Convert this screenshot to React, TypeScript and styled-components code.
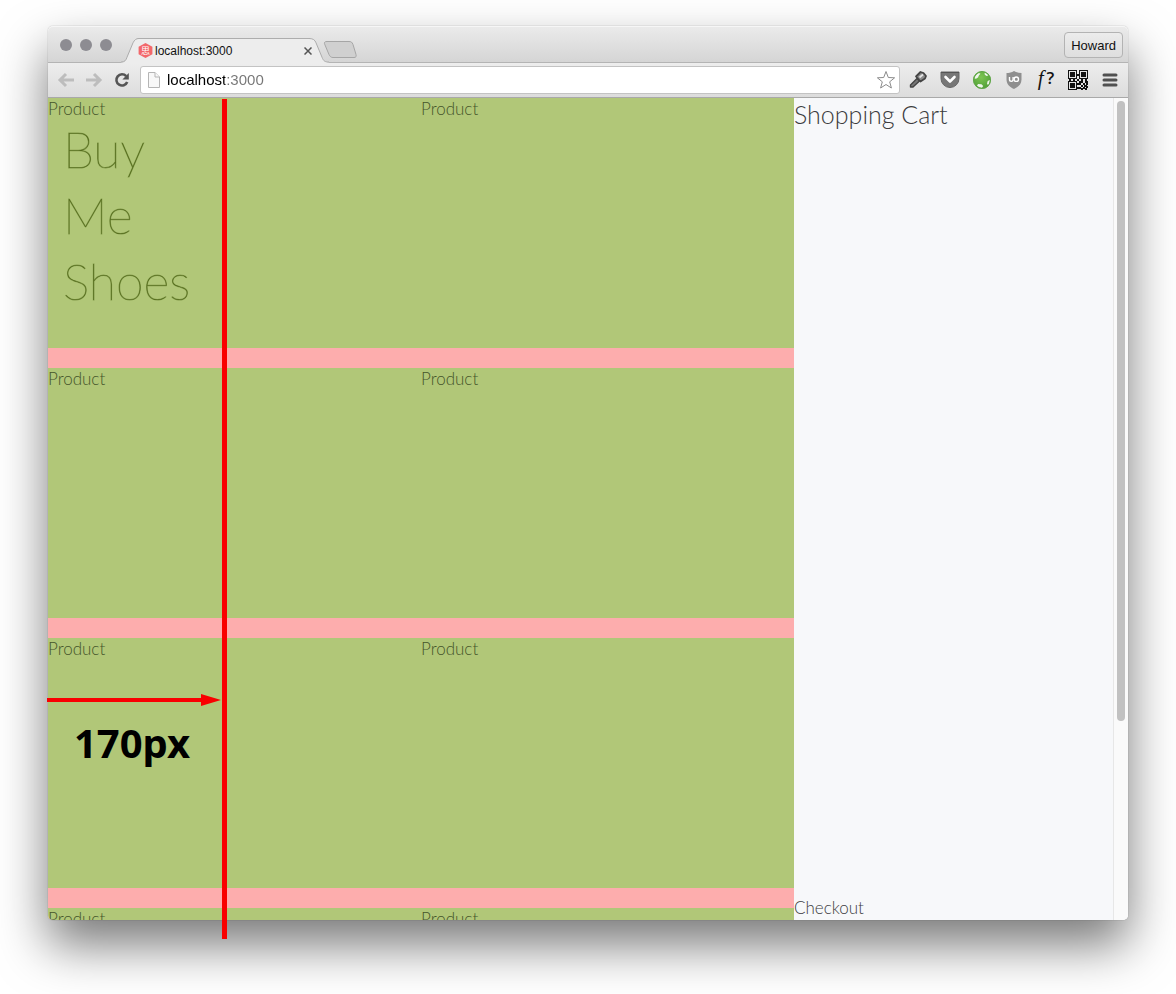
import React from "react";
import styled, { createGlobalStyle } from "styled-components";

const GlobalStyle = createGlobalStyle`
  * { box-sizing: border-box; }
  body {
    margin: 0;
    background: #fff;
    font-family: Lato, "Open Sans", sans-serif;
    font-weight: 300;
  }
  button, input { font-family: "Liberation Sans", Arial, sans-serif; margin: 0; }
`;

const Desktop = styled.div`
  height: 100vh;
  padding: 26px 48px 74px;
  overflow: hidden;
`;

const BrowserWindow = styled.div`
  position: relative;
  display: flex;
  flex-direction: column;
  height: 100%;
  border-radius: 5px;
  box-shadow: 0 0 1px rgba(0, 0, 0, 0.5), 0 25px 50px rgba(0, 0, 0, 0.53);
`;

const TabStrip = styled.header`
  display: flex;
  align-items: flex-end;
  flex: none;
  height: 37px;
  padding: 2px 5px 0 0;
  border-bottom: 1px solid #b4b4b4;
  border-radius: 5px 5px 0 0;
  background: linear-gradient(#ebebeb, #d5d5d5);
  box-shadow: inset 0 1px 0 #f6f6f6;
`;

const TrafficLights = styled.div`
  display: flex;
  align-self: center;
  gap: 8px;
  width: 73px;
  padding-left: 12px;
`;

const Light = styled.span`
  width: 12px;
  height: 12px;
  border-radius: 50%;
  background: #8d8c92;
`;

const Tab = styled.div`
  position: relative;
  display: flex;
  align-items: center;
  width: 208px;
  height: 25px;
  margin-bottom: -1px;
  padding: 0 14px 0 17px;
  font: 400 12px/16px "Liberation Sans", Arial, sans-serif;
  color: #111;
`;

const TabShape = styled.svg`
  position: absolute;
  inset: 0;
  width: 100%;
  height: 100%;
`;

const TabTitle = styled.span`
  position: relative;
  flex: 1;
  padding-left: 2px;
`;

const Favicon = styled.span`
  position: relative;
  display: grid;
  place-items: center;
  width: 15px;
  height: 15px;
  color: #fff;
  font: 400 9px/15px "Noto Sans CJK TC", sans-serif;
  background: #f2686b;
  clip-path: polygon(50% 0, 96% 25%, 96% 75%, 50% 100%, 4% 75%, 4% 25%);
`;

const IconButton = styled.button<{ $width?: number }>`
  position: relative;
  display: grid;
  place-items: center;
  flex: none;
  width: ${({ $width = 20 }) => $width}px;
  height: 24px;
  padding: 0;
  border: 0;
  color: #505050;
  background: transparent;
`;

const NewTab = styled(IconButton)`
  margin-left: -6px;
`;

const UserButton = styled.button`
  align-self: center;
  height: 26px;
  margin-left: auto;
  padding: 0 6px;
  border: 1px solid #b3b3b3;
  border-radius: 4px;
  background: linear-gradient(#ececec, #dedede);
  color: #111;
  font-size: 13px;
`;

const Toolbar = styled.div`
  display: flex;
  align-items: center;
  flex: none;
  height: 35px;
  padding: 0 6px 0 8px;
  border-bottom: 1px solid #a9a9a9;
  background: linear-gradient(#ededed, #dcdcdc);
`;

const Navigation = styled.nav`
  display: flex;
  gap: 8px;
  width: 84px;
`;

const AddressBar = styled.label`
  display: flex;
  align-items: center;
  flex: 1;
  height: 28px;
  padding: 0 3px 0 4px;
  border: 1px solid #c3c3c3;
  border-radius: 3px;
  background: #fff;
`;

const AddressInput = styled.input`
  flex: 1;
  min-width: 0;
  height: 24px;
  padding: 0 0 2px 4px;
  border: 0;
  outline: 0;
  color: #111;
  font-size: 15px;
  background: linear-gradient(to right, #000 62px, #757575 62px);
  background-clip: text;
  -webkit-background-clip: text;
  -webkit-text-fill-color: transparent;
`;

const Extensions = styled.div`
  display: flex;
  gap: 8px;
  padding-left: 6px;
`;

const Viewport = styled.main`
  display: flex;
  flex: 1;
  min-height: 0;
  overflow: hidden;
  border-radius: 0 0 5px 5px;
  background: #f7f8fa;
`;

const Products = styled.section`
  display: grid;
  grid-template-columns: 1fr 1fr;
  grid-auto-rows: 250px;
  align-content: start;
  row-gap: 20px;
  flex: 1;
  overflow: hidden;
  background: #fdadad;
`;

const Card = styled.article`
  background: #b1c778;
  color: #45552a;
  font-size: 17px;
  line-height: 22px;
`;

const Slogan = styled.h1`
  width: 170px;
  margin: -4px 0 0;
  padding: 0 15px;
  color: #4c6414;
  font-size: 50px;
  font-weight: 200;
  line-height: 66px;
  -webkit-text-stroke: 1px rgba(76, 100, 20, 0.45);
`;

const Cart = styled.aside`
  display: flex;
  flex-direction: column;
  justify-content: space-between;
  width: 319px;
  background: #f7f8fa;
  color: #3c3c3e;
`;

const CartTitle = styled.h2`
  margin: 0;
  font-size: 25px;
  font-weight: 300;
  line-height: 32px;
`;

const Checkout = styled.a`
  color: inherit;
  font-size: 17px;
  line-height: 24px;
  text-decoration: none;
`;

const ScrollTrack = styled.div`
  width: 15px;
  padding: 3px 3px 0 3px;
  border-left: 1px solid #e7e7e7;
  background: #fafafa;
`;

const ScrollThumb = styled.div`
  width: 8px;
  height: 620px;
  max-height: 100%;
  border-radius: 4px;
  background: #c1c1c1;
`;

/* Measuring marks drawn over the page */
const Ruler = styled.div`
  position: absolute;
  top: 73px;
  bottom: -19px;
  left: 174px;
  width: 5px;
  background: #f90000;
`;

const Measure = styled.div`
  position: absolute;
  top: 668px;
  left: -1px;
  width: 174px;
`;

const MeasureLabel = styled.strong`
  display: block;
  margin-top: 13px;
  padding-right: 4px;
  color: #000;
  font: 700 40px/48px "Noto Sans", "Open Sans", sans-serif;
  text-align: center;
`;

const Block = styled.svg`
  display: block;
`;

const Arrow = ({ flip }: { flip?: boolean }) => (
  <Block width="18" height="16" viewBox="0 0 18 16" fill="none" stroke="#bdbdbd" strokeWidth="3">
    <path d={flip ? "M1 8H15M9 2l6 6-6 6" : "M17 8H3M9 2L3 8l6 6"} />
  </Block>
);

const Reload = () => (
  <Block width="16" height="16" viewBox="0 0 16 16">
    <path d="M12.2 4.2A5.6 5.6 0 1 0 13.2 10" fill="none" stroke="#555" strokeWidth="2.6" />
    <path d="M14.8 1v6.4H8.4z" fill="#555" />
  </Block>
);

const PageIcon = () => (
  <Block width="18" height="18" viewBox="0 0 18 18" fill="#f8f8f8" stroke="#b5b5b5">
    <path d="M3.5 1.5h6.500l4.500 4.500v10.500h-11z" />
    <path d="M10 1.5V6h4.500" />
  </Block>
);

const Star = () => (
  <Block width="20" height="20" viewBox="0 0 20 20" fill="#fff" stroke="#8b8b8b" strokeLinejoin="round">
    <path d="M10 1.500l2.300 6 6.300.300-4.900 4 1.700 6.200L10 14.500 4.600 18l1.700-6.200-4.900-4 6.300-.300z" />
  </Block>
);

const Hammer = () => (
  <Block width="20" height="20" viewBox="0 0 20 20" strokeLinejoin="round">
    <path d="M9 8.500l2.500 2.500-6.500 6H2.500v-2z" fill="#777" stroke="#444" strokeWidth="1.400" />
    <path d="M8 6.500L12.500 2l3 1 2.500 3-1 2.500-4.500 3z" fill="#8b8b8b" stroke="#444" strokeWidth="1.800" />
    <path d="M11.500 7.500l3.500-3" stroke="#e4e4e4" strokeWidth="1.800" />
  </Block>
);

const Pocket = () => (
  <Block width="20" height="18" viewBox="0 0 20 18">
    <path d="M1 1h18v6.500a9 9 0 0 1-18 0z" fill="#777" stroke="#666" />
    <path d="M1 1.500h18" stroke="#555" />
    <path d="M5.500 6l4.500 4.500L14.500 6" fill="none" stroke="#fff" strokeWidth="2.600" strokeLinecap="round" strokeLinejoin="round" />
  </Block>
);

const Globe = () => (
  <Block width="20" height="20" viewBox="0 0 20 20">
    <defs>
      <radialGradient id="globe" cx="45%" cy="35%" r="75%">
        <stop offset="0" stopColor="#7cc552" />
        <stop offset="1" stopColor="#4b9a35" />
      </radialGradient>
    </defs>
    <circle cx="10" cy="10" r="8.800" fill="url(#globe)" />
    <path d="M2.500 8.500C3 6 4.500 4 7 3l1.500.800-1.500 1.500-1 2.200-2 1.200zM12.500 2.800c1.800.500 3 1.500 3.800 2.700l-1.800.500-1.700-1.200zM6 14l3.500.300 1.700 1.700-1.200 1.700c-2 0-3.500-.700-5-2zM15.700 11l2.100-1c0 2-.600 3.800-1.800 5.200l-1-1.700z" fill="#f0f5ed" />
    <circle cx="10" cy="10" r="8.500" fill="none" stroke="#5fa548" strokeWidth="1" />
  </Block>
);

const Shield = () => (
  <Block width="18" height="20" viewBox="0 0 18 20">
    <path d="M9 1c2.300 1.400 4.800 2 7.500 2v6.500c0 4.500-3 7.500-7.500 9.500-4.500-2-7.500-5-7.500-9.500V3C4.200 3 6.700 2.400 9 1z" fill="#8f8f8f" />
    <path d="M4.500 7v2.600a1.800 1.800 0 0 0 3.600 0V7" fill="none" stroke="#fff" strokeWidth="1.400" />
    <circle cx="11.300" cy="9.200" r="2.200" fill="none" stroke="#fff" strokeWidth="1.400" />
  </Block>
);

const FontMark = styled.span`
  display: flex;
  gap: 3px;
  padding-bottom: 4px;
  color: #151515;
  font: italic 400 21px/20px "Liberation Serif", serif;
`;

const QuestionMark = styled.span`
  font: 600 17px/20px "Open Sans", sans-serif;
`;

const finders = [[0, 0], [11, 0], [0, 11]];
const modules = [
  [9, 9], [5, 9], [1, 9], [9, 4], [9, 13], [13, 9], [17, 9], [9, 17],
  [11, 11], [11, 13], [13, 11], [15, 13], [13, 15], [17, 11], [18, 11],
  [11, 17], [15, 17], [17, 15], [18, 16], [18, 13], [13, 18], [16, 15], [17, 18],
];

const QrCode = () => (
  <Block width="20" height="20" viewBox="0 0 20 20" shapeRendering="crispEdges">
    {finders.map(([x, y]) => (
      <g key={`${x}-${y}`}>
        <rect x={x} y={y} width="9" height="9" fill="#111" />
        <rect x={x + 1} y={y + 1} width="7" height="7" fill="#e4e4e4" />
        <rect x={x + 2} y={y + 2} width="5" height="5" fill="#111" />
      </g>
    ))}
    {modules.map(([x, y]) => (
      <rect key={`${x}-${y}`} x={x} y={y} width="2" height="2" fill="#111" />
    ))}
  </Block>
);

const Menu = () => (
  <Block width="16" height="14" viewBox="0 0 16 14" stroke="#505050" strokeWidth="3" strokeLinecap="round">
    <path d="M2 2h12M2 7h12M2 12h12" />
  </Block>
);

const extensions = [
  { name: "Developer tools", icon: <Hammer /> },
  { name: "Save to Pocket", icon: <Pocket /> },
  { name: "Web proxy", icon: <Globe /> },
  { name: "Content blocker", icon: <Shield /> },
  { name: "Font finder", icon: <FontMark>f<QuestionMark>?</QuestionMark></FontMark> },
  { name: "QR code", icon: <QrCode /> },
  { name: "Menu", icon: <Menu /> },
];

const slogans = ["Buy Me Shoes", "", "", "", "", "", "", ""];

export default function App() {
  return (
    <Desktop>
      <GlobalStyle />
      <BrowserWindow>
        <TabStrip>
          <TrafficLights>
            <Light />
            <Light />
            <Light />
          </TrafficLights>
          <Tab>
            <TabShape viewBox="0 0 208 26" preserveAspectRatio="none" aria-hidden="true">
              <path d="M0 25.500C4 25 5 23 6 20L12 5C13.500 2 15 .500 18 .500H188C192 .500 194 2 195 5L201 20C202.500 24 204 25 208 25.500V26H0z" fill="#ededed" />
              <path d="M0 25C4 25 5 23 6 20L12 5C13.500 2 15 .500 18 .500H188C192 .500 194 2 195 5L201 20C202.500 24 204 25 208 25" fill="none" stroke="#aaa" />
            </TabShape>
            <Favicon>思</Favicon>
            <TabTitle>localhost:3000</TabTitle>
            <IconButton $width={14} aria-label="Close tab">
              <Block width="8" height="8" viewBox="0 0 8 8" stroke="#555" strokeWidth="1.500">
                <path d="M.500.500l7 7M7.500.500l-7 7" />
              </Block>
            </IconButton>
          </Tab>
          <NewTab $width={34} aria-label="New tab">
            <Block width="34" height="18" viewBox="0 0 34 18">
              <path d="M4 .500H26c2 0 3 .500 4 3l3 10c.500 2 0 3-2 3H10c-2 0-3-1-4-3L2 4C1 2 1 .500 4 .500z" fill="#d0d0d0" stroke="#a6a6a6" />
            </Block>
          </NewTab>
          <UserButton>Howard</UserButton>
        </TabStrip>
        <Toolbar>
          <Navigation>
            <IconButton aria-label="Back"><Arrow /></IconButton>
            <IconButton aria-label="Forward"><Arrow flip /></IconButton>
            <IconButton aria-label="Reload"><Reload /></IconButton>
          </Navigation>
          <AddressBar>
            <PageIcon />
            <AddressInput aria-label="Address" defaultValue="localhost:3000" />
            <IconButton aria-label="Bookmark"><Star /></IconButton>
          </AddressBar>
          <Extensions>
            {extensions.map(({ name, icon }) => (
              <IconButton key={name} $width={24} aria-label={name}>{icon}</IconButton>
            ))}
          </Extensions>
        </Toolbar>
        <Viewport>
          <Products>
            {slogans.map((slogan, index) => (
              <Card key={index}>
                Product
                {slogan && <Slogan>{slogan}</Slogan>}
              </Card>
            ))}
          </Products>
          <Cart>
            <CartTitle>Shopping Cart</CartTitle>
            <Checkout href="#checkout">Checkout</Checkout>
          </Cart>
          <ScrollTrack>
            <ScrollThumb />
          </ScrollTrack>
        </Viewport>
        <Ruler />
        <Measure>
          <Block width="174" height="12" viewBox="0 0 174 12" fill="#f90000">
            <path d="M0 4h154V0l20 6-20 6V8H0z" />
          </Block>
          <MeasureLabel>170px</MeasureLabel>
        </Measure>
      </BrowserWindow>
    </Desktop>
  );
}
